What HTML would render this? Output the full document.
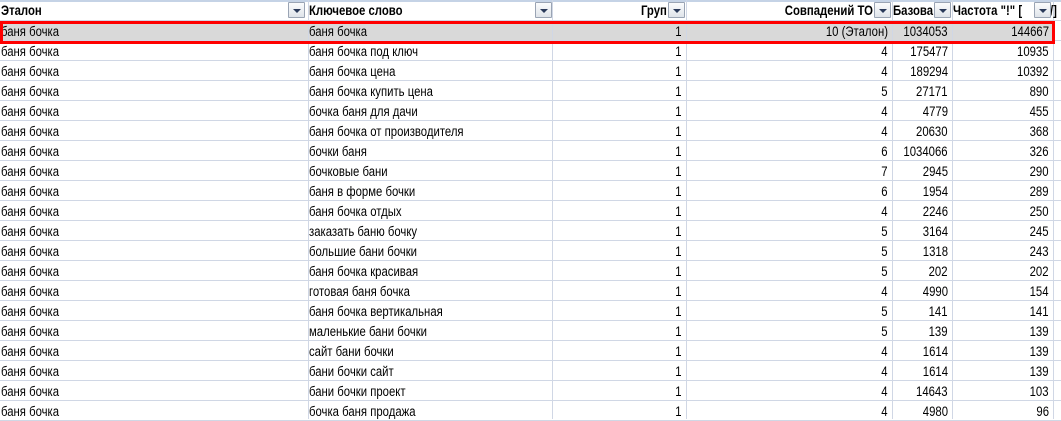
<!DOCTYPE html>
<html><head><meta charset="utf-8"><style>
*{margin:0;padding:0;box-sizing:border-box}
body{width:1061px;height:419px;overflow:hidden;background:#fff;font-family:"Liberation Sans",sans-serif;font-size:13.5px;color:#000;position:relative}
.c{position:absolute;height:20px;line-height:21px;white-space:nowrap;overflow:hidden;padding:0 1px}
.c span{display:inline-block;transform:scaleX(0.84);transform-origin:left center}
.r{text-align:right}
.r span{transform-origin:right center}
.vl{position:absolute;top:0;width:1px;height:419px;background:#d0d7e5}
.hl{position:absolute;left:0;width:1061px;height:1px;background:#d0d7e5}
.b{font-weight:bold}
.btn{position:absolute;top:2px;width:17px;height:16px;border:1px solid #9aa4b4;background:linear-gradient(#fbfcfd,#dfe4ea);border-radius:1px}
.btn:after{content:"";position:absolute;left:4px;top:6px;border-left:4px solid transparent;border-right:4px solid transparent;border-top:4px solid #2a3a5a}
</style></head><body>
<div style="position:absolute;left:0;top:0;width:1061px;height:2px;background:#c5d3e6"></div>
<div style="position:absolute;left:0;top:21px;width:1054px;height:21px;background:#d9d9d9"></div>
<div id="g"></div>
<div style="position:absolute;left:0;top:21px;width:1055px;height:23px;border:3px solid #f00"></div>
<script>
var cols=[0,308,552,686,892,952,1053];
var h='';
cols.forEach(function(x){if(x>0)h+='<div class="vl" style="left:'+x+'px"></div>'});
for(var i=1;i<=21;i++)h+='<div class="hl" style="top:'+(i*20)+'px"></div>';
function c(cls,x,y,w,t,ex){return '<div class="c '+cls+'" style="left:'+x+'px;top:'+y+'px;width:'+w+'px;'+(ex||'')+'"><span>'+t+'</span></div>';}
h+=c('b',0,0,288,'Эталон');
h+=c('b',308,0,228,'Ключевое слово');
h+=c('b r',552,0,116,'Груп');
h+=c('b r',686,0,188,'Совпадений ТО');
h+=c('b',892,0,44,'Базова');
h+=c('b',952,0,84,'Частота "!" [');
h+=c('b',1050,0,11,'/]','padding:0');
[288,535,668,874,934,1034].forEach(function(x){h+='<div class="btn" style="left:'+x+'px"></div>'});
var d=[
["баня бочка",1,"10 (Эталон)",1034053,144667],
["баня бочка под ключ",1,4,175477,10935],
["баня бочка цена",1,4,189294,10392],
["баня бочка купить цена",1,5,27171,890],
["бочка баня для дачи",1,4,4779,455],
["баня бочка от производителя",1,4,20630,368],
["бочки баня",1,6,1034066,326],
["бочковые бани",1,7,2945,290],
["баня в форме бочки",1,6,1954,289],
["баня бочка отдых",1,4,2246,250],
["заказать баню бочку",1,5,3164,245],
["большие бани бочки",1,5,1318,243],
["баня бочка красивая",1,5,202,202],
["готовая баня бочка",1,4,4990,154],
["баня бочка вертикальная",1,5,141,141],
["маленькие бани бочки",1,5,139,139],
["сайт бани бочки",1,4,1614,139],
["бани бочки сайт",1,4,1614,139],
["бани бочки проект",1,4,14643,103],
["бочка баня продажа",1,4,4980,96]];
d.forEach(function(r,i){var y=21+i*20;
h+=c('',0,y,308,'баня бочка');
h+=c('',308,y,244,r[0]);
h+=c('r',552,y,134,r[1],'padding-right:4px');
h+=c('r',686,y,206,r[2],'padding-right:4px');
h+=c('r',892,y,60,r[3],'padding-right:4px');
h+=c('r',952,y,101,r[4],'padding-right:4px');
});
document.getElementById('g').innerHTML=h;
</script>
</body></html>
